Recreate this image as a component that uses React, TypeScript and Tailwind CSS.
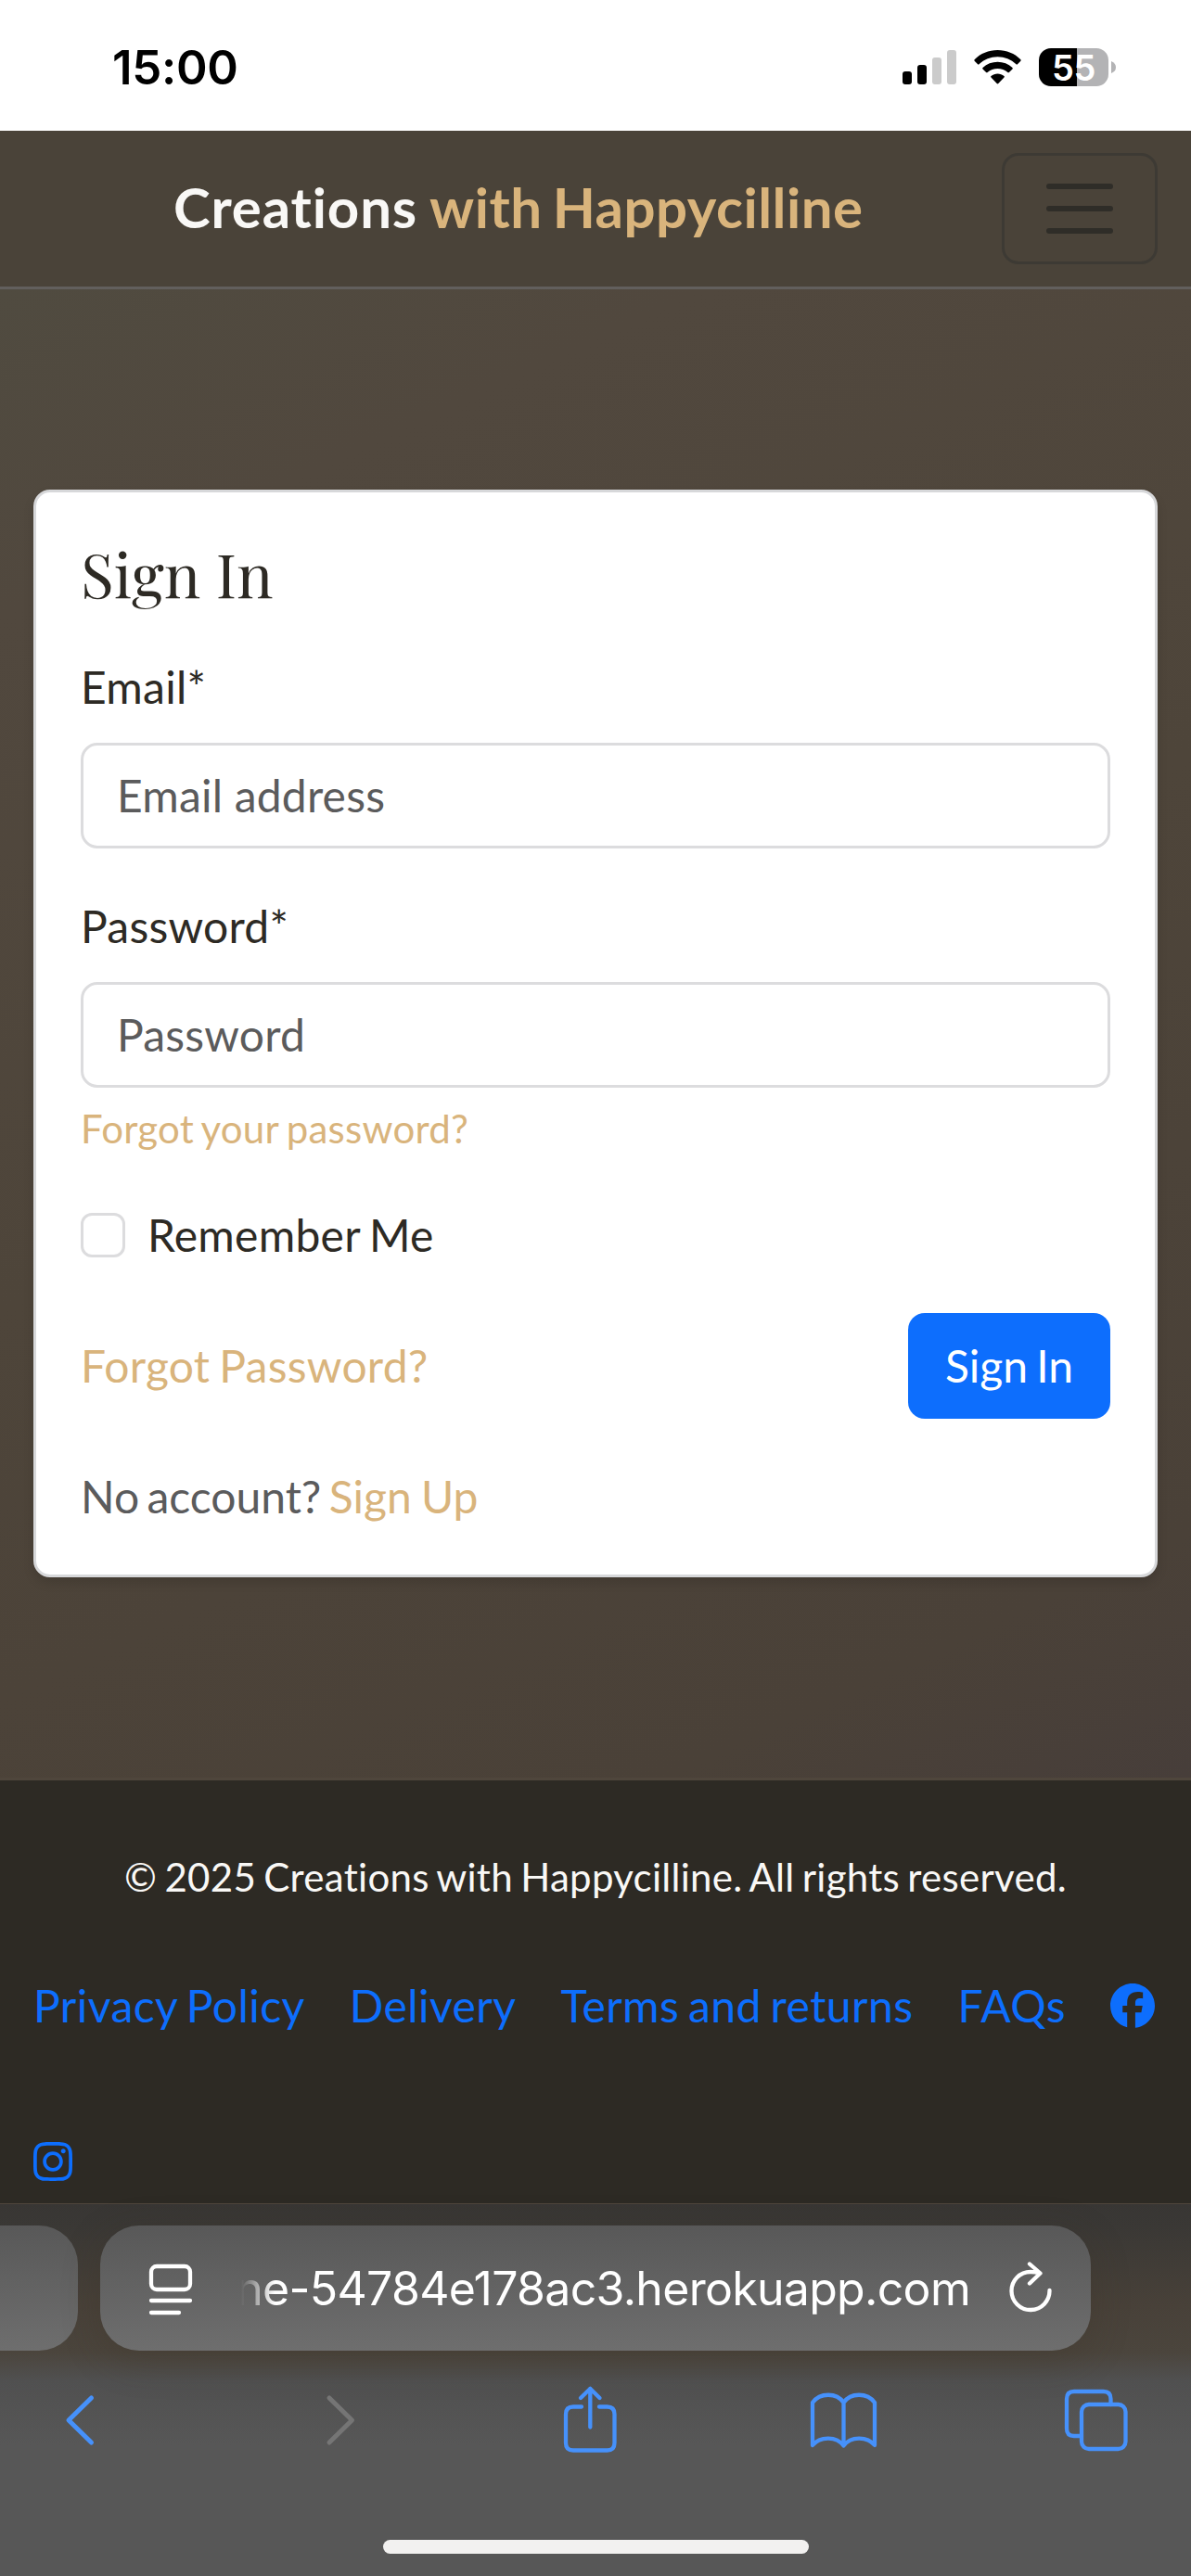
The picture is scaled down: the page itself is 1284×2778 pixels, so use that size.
import type { ReactNode } from "react";
import { FaFacebook, FaInstagram } from "react-icons/fa6";

function StatusBar() {
  return (
    <div className="flex h-[141px] shrink-0 items-start justify-between bg-white pl-[121px] pr-[81px] text-black">
      <div className="mt-[43px] font-[Inter] text-[51px] font-semibold leading-[60px] tracking-[-0.3px]">15:00</div>
      <div className="mt-[52px] flex">
        <svg width="58" height="41" viewBox="0 0 58 41">
          <rect x="0" y="25" width="10" height="14" rx="3" fill="#000" />
          <rect x="16" y="18" width="10" height="21" rx="3" fill="#000" />
          <rect x="32" y="10" width="10" height="29" rx="3" fill="#cbcbcb" />
          <rect x="48" y="2" width="10" height="37" rx="3" fill="#cbcbcb" />
        </svg>
        <svg className="ml-[19px]" width="51" height="41" viewBox="0 0 51 41">
          <path d="M25.5 2C35 2 44 5.700 50.400 12.200Q51 13 50.400 13.700L46.900 17.300Q46.200 18 45.500 17.300C40 12.100 33 9.300 25.500 9.300S11 12.100 5.500 17.300Q4.800 18 4.100 17.300L.6 13.700Q0 13 .6 12.200C7 5.700 16 2 25.500 2Z" />
          <path d="M25.500 14.700c6 0 11.600 2.200 16 6.200q.7.700 0 1.500l-3.600 3.500q-.7.700-1.500.1c-3-2.600-6.800-4-10.900-4s-7.900 1.400-10.900 4q-.8.600-1.500-.1l-3.600-3.500q-.7-.8 0-1.500c4.400-4 10-6.200 16-6.200Z" />
          <path d="M25.500 27.400c2.600 0 5 .9 7 2.500q.8.700 0 1.500l-6.200 6.600q-.8.800-1.600 0l-6.200-6.600q-.8-.8 0-1.500c2-1.600 4.400-2.500 7-2.500Z" />
        </svg>
        <div className="ml-[19px] flex h-[41px] w-[75px] items-center justify-center rounded-[13px] bg-[linear-gradient(90deg,#000_41px,#b3b3b5_41px)]">
          <span className="font-[Inter] text-[38px] font-semibold leading-[50px] tracking-[-0.5px] text-white">55</span>
        </div>
        <svg className="ml-[3px] mt-[14px]" width="5" height="13" viewBox="0 0 5 13">
          <path d="M0 0Q5 2 5 6.500T0 13Z" fill="#b3b3b5" />
        </svg>
      </div>
    </div>
  );
}

function Header() {
  return (
    <header className="flex h-[171px] shrink-0 items-center justify-between border-b-[3px] border-[#625f5d] bg-[#4a4339] pl-[187px] pr-[36px]">
      <div className="mb-[4px] whitespace-nowrap text-[60px] font-bold leading-[90px] tracking-[0.85px] text-[#f9f8f6] [word-spacing:-2.5px]">
        Creations <span className="tracking-[0.5px] text-[#d9b47c] [word-spacing:-4px]">with Happycilline</span>
      </div>
      <button className="flex h-[120px] w-[168px] items-center justify-center rounded-[18px] border-[3px] border-[#3d3a34]" aria-label="Menu">
        <svg width="90" height="90" viewBox="0 0 30 30" fill="none" stroke="#2f2d28" strokeWidth="2" strokeLinecap="round">
          <path d="M4 7h22M4 15h22M4 23h22" />
        </svg>
      </button>
    </header>
  );
}

function Field({ label, placeholder, type }: { label: string; placeholder: string; type: string }) {
  return (
    <label className="block">
      <span className="block">{label}</span>
      <input
        type={type}
        placeholder={placeholder}
        className="mt-[24px] block h-[114px] w-full rounded-[18px] border-[3px] border-[#dcdcde] bg-white px-[36px] pb-[2px] tracking-[0.2px] placeholder:text-[#5b5b5c] placeholder:opacity-100"
      />
    </label>
  );
}

function SignInCard() {
  return (
    <form className="flex h-[1173px] flex-col rounded-[18px] border-[3px] border-[#d7d8da] bg-white p-[48px] text-[48px] leading-[72px] tracking-[0.25px] text-[#2d2a24] shadow-[0_6px_12px_rgba(0,0,0,0.12)] [word-spacing:-2.5px]">
      <h1 className="mb-[48px] h-[78px] font-['Playfair_Display','Liberation_Serif',serif] text-[66px] leading-[79px] tracking-normal [word-spacing:0px]">Sign In</h1>
      <Field label="Email*" placeholder="Email address" type="email" />
      <div className="mt-[48px]">
        <Field label="Password*" placeholder="Password" type="password" />
      </div>
      <a className="mt-[13px] text-[42px] leading-[63px] text-[#d9b47c]">Forgot your password?</a>
      <label className="mt-[47px] flex items-center gap-[24px]">
        <input type="checkbox" className="size-[48px] appearance-none rounded-[12px] border-[3px] border-[#dcdcde] bg-white" />
        Remember Me
      </label>
      <div className="mt-[48px] flex items-center justify-between">
        <a className="text-[#d9b47c]">Forgot Password?</a>
        <button type="button" className="h-[114px] w-[218px] rounded-[18px] bg-[#0d6efd] tracking-normal text-white [word-spacing:-3px]">
          Sign In
        </button>
      </div>
      <p className="mt-[48px] tracking-normal text-[#5b5b5c] [word-spacing:-4px]">
        No account? <a className="text-[#d9b47c] [word-spacing:-2px]">Sign Up</a>
      </p>
    </form>
  );
}

function Footer() {
  return (
    <footer className="h-[459px] shrink-0 border-t-[3px] border-[#4f463c] bg-[#2d2a24] pt-[73px]">
      <p className="text-center text-[42px] leading-[63px] tracking-[0.3px] text-[#f9f8f6] [word-spacing:-2.8px]">© 2025 Creations with Happycilline. All rights reserved.</p>
      <nav className="mt-[71px] flex flex-wrap items-center gap-x-[48px] gap-y-[96px] whitespace-nowrap pl-[36px] text-[48px] leading-[72px] tracking-[0.45px] text-[#0d6efd] [word-spacing:-3px]">
        <a>Privacy Policy</a>
        <a>Delivery</a>
        <a>Terms and returns</a>
        <a>FAQs</a>
        <a className="flex h-[72px] items-center"><FaFacebook className="size-[48px]" /></a>
        <a className="flex h-[72px] items-center"><FaInstagram className="h-[48px] w-[42px]" /></a>
      </nav>
    </footer>
  );
}

function ToolIcon({ width, height, className, children }: { width: number; height: number; className: string; children: ReactNode }) {
  return (
    <svg className={className} width={width} height={height} viewBox={`0 0 ${width} ${height}`} fill="none" stroke="currentColor" strokeWidth="4.3" strokeLinecap="round" strokeLinejoin="round">
      {children}
    </svg>
  );
}

function BrowserBar() {
  return (
    <div className="flex flex-1 flex-col border-t border-[#4f463c] bg-[linear-gradient(180deg,#383634_0px,#3a3835_24px,#484139_110px,#4b453d_160px,#505050_190px,#575757_260px)]">
      <div className="mt-[23px] flex h-[135px]">
        <div className="w-[84px] rounded-r-[42px] bg-linear-to-b from-[#585858] to-[#6e6e6e]" />
        <div className="ml-[24px] flex w-[1068px] items-center rounded-[42px] bg-linear-to-b from-[#585858] to-[#6e6e6e] pl-[52px] text-white shadow-[0_10px_40px_rgba(60,50,35,0.3)]">
          <ToolIcon width={48} height={56} className="mt-[2px] shrink-0">
            <rect x="3" y="3" width="42" height="25" rx="6" />
            <path d="M3 40h42M3 53h30" />
          </ToolIcon>
          <div className="ml-[38px] flex w-[800px] shrink-0 justify-end whitespace-nowrap font-[Inter] text-[50px] leading-[70px] tracking-[-0.7px] [mask-image:linear-gradient(90deg,transparent_14px,#000_50px)]">
            <span>ne-54784e178ac3.herokuapp.com</span>
          </div>
          <ToolIcon width={50} height={58} className="ml-[40px] shrink-0">
            <path d="M45.500 31A20.500 20.500 0 1 1 25 11Q30 11 35 12.500M24 2.500L35.500 12.500L24 23.500" />
          </ToolIcon>
        </div>
      </div>
      <div className="flex h-[147px] items-center pl-[69px] text-[#4691fb]">
        <ToolIcon width={36} height={56} className="mt-[2px] [stroke-width:5]">
          <path d="M29.500 4L5 28L29.500 52" />
        </ToolIcon>
        <ToolIcon width={36} height={56} className="ml-[244px] mt-[2px] text-[#757575] [stroke-width:5]">
          <path d="M6 4L30.500 28L6 52" />
        </ToolIcon>
        <ToolIcon width={60} height={74} className="ml-[221px]">
          <path d="M21 23.500H12Q4 23.500 4 31.500V62.500Q4 70.500 12 70.500H48.500Q56.500 70.500 56.500 62.500V31.500Q56.500 23.500 48.500 23.500H40M30.300 45.500V4M20 14L30.300 4L40.500 14" />
        </ToolIcon>
        <ToolIcon width={74} height={62} className="ml-[206px]">
          <path d="M4 13C12 2 30 2 37.500 13C45 2 63 2 71 13V59C63 49 45 49 37.500 59.500C30 49 12 49 4 59ZM37.500 13V59" />
        </ToolIcon>
        <ToolIcon width={70} height={72} className="ml-[201px]">
          <path d="M19 54H11Q3 54 3 46V14Q3 6 11 6H42.500Q50.500 6 50.500 14V20" />
          <rect x="19" y="20" width="47.500" height="48" rx="8" />
        </ToolIcon>
      </div>
      <div className="mx-auto mb-[24px] mt-auto h-[15px] w-[459px] rounded-full bg-[#f2f1f0]" />
    </div>
  );
}

export default function App() {
  return (
    <div className="flex h-[2778px] w-[1284px] flex-col overflow-hidden font-[Lato,sans-serif]">
      <StatusBar />
      <Header />
      <main className="h-[1605px] shrink-0 bg-[linear-gradient(155deg,#504b40_0%,#51483e_16%,#4e453a_50%,#4a4138_88%,#473e3a_100%)] px-[36px] pt-[216px]">
        <SignInCard />
      </main>
      <Footer />
      <BrowserBar />
    </div>
  );
}
